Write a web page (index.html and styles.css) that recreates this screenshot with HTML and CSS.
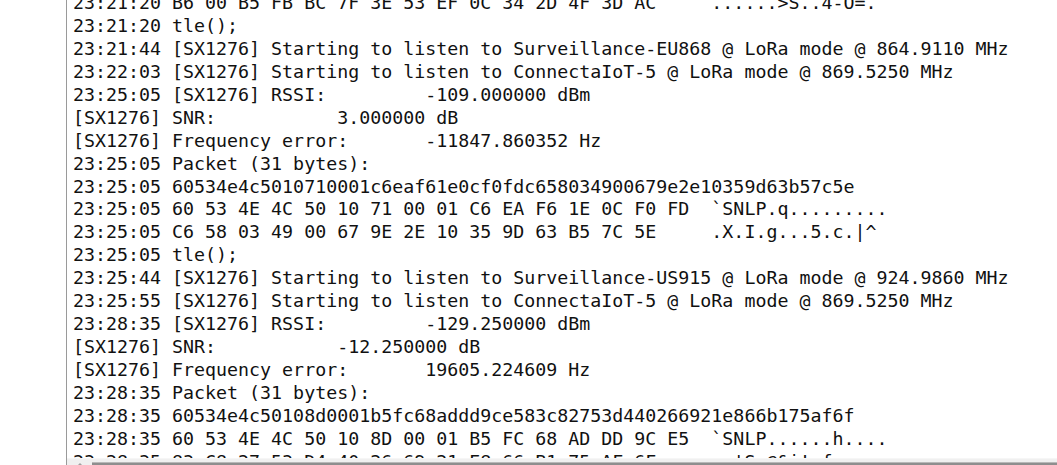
FILE: index.html
```html
<!DOCTYPE html>
<html>
<head>
<meta charset="utf-8">
<link rel="stylesheet" href="styles.css">
</head>
<body>
<div class="console">
  <div class="log-area">
<pre class="log">23:21:20 B6 00 B5 FB BC 7F 3E 53 EF 0C 34 2D 4F 3D AC     ......&gt;S..4-O=.
23:21:20 tle();
23:21:44 [SX1276] Starting to listen to Surveillance-EU868 @ LoRa mode @ 864.9110 MHz
23:22:03 [SX1276] Starting to listen to ConnectaIoT-5 @ LoRa mode @ 869.5250 MHz
23:25:05 [SX1276] RSSI:         -109.000000 dBm
[SX1276] SNR:           3.000000 dB
[SX1276] Frequency error:       -11847.860352 Hz
23:25:05 Packet (31 bytes):
23:25:05 60534e4c5010710001c6eaf61e0cf0fdc658034900679e2e10359d63b57c5e
23:25:05 60 53 4E 4C 50 10 71 00 01 C6 EA F6 1E 0C F0 FD  `SNLP.q.........
23:25:05 C6 58 03 49 00 67 9E 2E 10 35 9D 63 B5 7C 5E     .X.I.g...5.c.|^
23:25:05 tle();
23:25:44 [SX1276] Starting to listen to Surveillance-US915 @ LoRa mode @ 924.9860 MHz
23:25:55 [SX1276] Starting to listen to ConnectaIoT-5 @ LoRa mode @ 869.5250 MHz
23:28:35 [SX1276] RSSI:         -129.250000 dBm
[SX1276] SNR:           -12.250000 dB
[SX1276] Frequency error:       19605.224609 Hz
23:28:35 Packet (31 bytes):
23:28:35 60534e4c50108d0001b5fc68addd9ce583c82753d440266921e866b175af6f
23:28:35 60 53 4E 4C 50 10 8D 00 01 B5 FC 68 AD DD 9C E5  `SNLP......h....
23:28:35 83 C8 27 53 D4 40 26 69 21 E8 66 B1 75 AF 6F     ..'S.@&amp;i!.f.u.o</pre>
  </div>
  <div class="hscroll">
    <span class="arrow"></span>
    <span class="thumb"></span>
  </div>
</div>
</body>
</html>
```

FILE: styles.css
```css
html, body {
  margin: 0;
  padding: 0;
  background: #ffffff;
  overflow: hidden;
  height: 465px;
}

.console {
  margin-left: 66px;
  border-left: 1px solid #9a9a9a;
  height: 480px;
  display: flex;
  flex-direction: column;
}

.log-area {
  height: 458px;
  overflow: hidden;
  flex: none;
}

.log {
  margin: -8px 0 0 0;
  padding-left: 6px;
  font-family: "DejaVu Sans Mono", monospace;
  font-size: 18.3px;
  line-height: 22.94px;
  color: #111111;
  white-space: pre;
  tab-size: 8;
}

.hscroll {
  flex: none;
  height: 17px;
  background: #f0f0f0;
  border-top: 1px solid #f6f6f6;
  display: flex;
  align-items: flex-start;
  gap: 0;
}

.arrow {
  width: 0;
  height: 0;
  margin: 4px 8px 0 9px;
  border-left: 4px solid transparent;
  border-right: 4px solid transparent;
  border-bottom: 4px solid #a0a0a0;
}

.thumb {
  flex: 1;
  height: 12px;
  margin-top: 3px;
  background: #8e8e8e;
  border-top: 1px solid #b8b8b8;
}
```
